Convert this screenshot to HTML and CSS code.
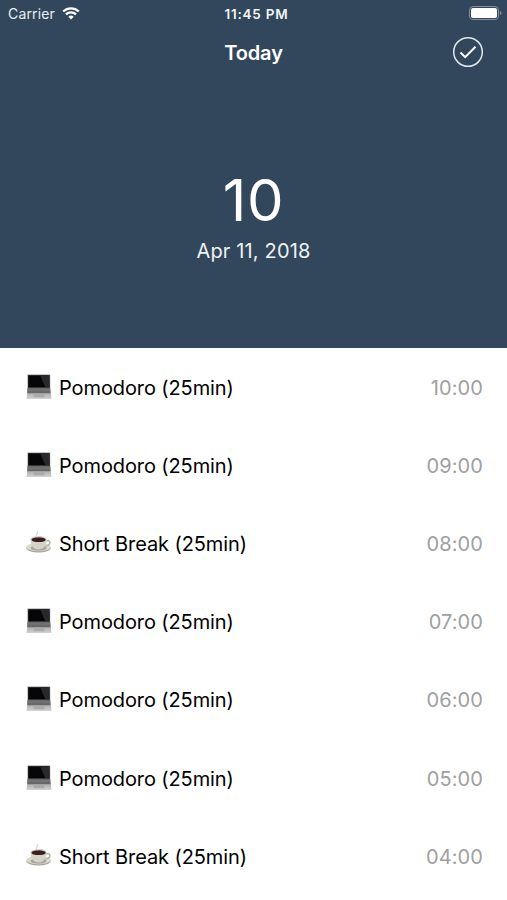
FILE: index.html
```html
<!DOCTYPE html>
<html lang="en">
<head>
<meta charset="utf-8">
<title>Today</title>
<link rel="stylesheet" href="styles.css">
</head>
<body>
<svg class="defs" aria-hidden="true">
  <defs>
    <linearGradient id="base" x1="0" y1="0" x2="0" y2="1"><stop offset="0" stop-color="#b0b0b0"/><stop offset="1" stop-color="#d2d2d2"/></linearGradient>
    <symbol id="laptop" viewBox="0 0 26 26">
      <path d="M1.500.5h22.700V19H1.500z" fill="#8c8c8c"/>
      <path d="M2.200 1.200h21.200l.2 12.500H2.200z" fill="#060608"/>
      <path d="M14 1.200h9.400l.2 12.500h-4z" fill="#29292c"/>
      <path d="M1.500 13.700h22.700l.6 6H1.200z" fill="#686868"/>
      <path d="M2 16h22" stroke="#888" stroke-width=".7"/>
      <path d="M1.200 19.500h23.600l.7 5.500H.5z" fill="url(#base)"/>
      <path d="M8 19.700h10l.6 3.500H7.500z" fill="#aaa"/>
    </symbol>
    <symbol id="coffee" viewBox="0 0 26 26">
      <ellipse cx="12.500" cy="18" rx="12.200" ry="4.500" fill="#a9a59b"/>
      <ellipse cx="12.500" cy="17.200" rx="12" ry="4" fill="#dcd9d2"/>
      <ellipse cx="12.500" cy="18" rx="8" ry="2.800" fill="#aaa69b"/>
      <path d="M20 11c5-2 5.500 4-.5 5" fill="none" stroke="#b9b6ae" stroke-width="1.700"/>
      <path d="M4.500 9.500C5 15 7 19.500 12.500 19.500s7.700-4.500 8.200-10z" fill="#d6d2c9"/>
      <ellipse cx="12.600" cy="9.200" rx="8.100" ry="3.200" fill="#d5d1c9"/>
      <ellipse cx="12.600" cy="9.700" rx="7.100" ry="2.400" fill="#3a211b"/>
      <path d="M12 7C7 5 14 4 11 1" fill="none" stroke="#ddd" stroke-width="1.300"/>
    </symbol>
  </defs>
</svg>
<header class="hero">
  <div class="status">
    <div class="carrier"><span>Carrier</span>
      <svg class="wifi" viewBox="0 0 18 13"><path d="M1.200 4.500a11.500 11.500 0 0 1 15.600 0M4 7.400a7.300 7.300 0 0 1 10 0" fill="none" stroke="#fff" stroke-width="2.200"/><path d="M9 12.500 6.300 9.700a4 4 0 0 1 5.400 0z" fill="#fff"/></svg>
    </div>
    <div class="clock">11:45 PM</div>
    <svg class="battery" viewBox="0 0 33 15"><rect x=".5" y=".5" width="29" height="13" rx="3.500" fill="none" stroke="#8391a0"/><rect x="2" y="2" width="26" height="10" rx="2" fill="#fff"/><path d="M31 5c2 .5 2 3.500 0 4z" fill="#8391a0"/></svg>
  </div>
  <nav class="nav"><h1>Today</h1>
    <svg class="check" viewBox="0 0 32 32"><circle cx="16" cy="16" r="14.300"/><path class="tick" d="m8.500 16.500 4.700 4.700L23.500 10.800"/></svg>
  </nav>
  <div class="count">10</div>
  <div class="date">Apr 11, 2018</div>
</header>
<main>
  <div class="row"><svg class="icon"><use href="#laptop"/></svg><span class="name">Pomodoro (25min)</span><time>10:00</time></div>
  <div class="row"><svg class="icon"><use href="#laptop"/></svg><span class="name">Pomodoro (25min)</span><time>09:00</time></div>
  <div class="row"><svg class="icon"><use href="#coffee"/></svg><span class="name">Short Break (25min)</span><time>08:00</time></div>
  <div class="row"><svg class="icon"><use href="#laptop"/></svg><span class="name">Pomodoro (25min)</span><time>07:00</time></div>
  <div class="row"><svg class="icon"><use href="#laptop"/></svg><span class="name">Pomodoro (25min)</span><time>06:00</time></div>
  <div class="row"><svg class="icon"><use href="#laptop"/></svg><span class="name">Pomodoro (25min)</span><time>05:00</time></div>
  <div class="row"><svg class="icon"><use href="#coffee"/></svg><span class="name">Short Break (25min)</span><time>04:00</time></div>
</main>
</body>
</html>
```
FILE: styles.css
```css
* { box-sizing: border-box; }
body { margin: 0; background: #fff; color: #000; font-family: Inter, sans-serif; overflow: hidden; height: 900px; }
.defs { display: block; width: 0; height: 0; }
.hero { height: 348px; background: #32475b; color: #fff; text-align: center; }
.status { height: 27px; display: grid; grid-template-columns: 1fr auto 1fr; align-items: center; padding: 0 5px 0 8px; font-size: 14px; }
.carrier { display: flex; align-items: center; gap: 7px; color: #e9eff4; letter-spacing: .15px; }
.wifi { width: 18px; height: 13px; }
.clock { padding-left: 3px; font-size: 13.5px; font-weight: 600; letter-spacing: .8px; color: #f2f6f9; }
.battery { width: 33px; height: 15px; justify-self: end; }
.nav { height: 50px; display: grid; grid-template-columns: 1fr auto 1fr; align-items: center; padding: 0 23px; }
h1 { grid-column: 2; margin: 0; padding-top: 1px; font-size: 20px; font-weight: 600; letter-spacing: -.1px; }
.check { width: 32px; height: 32px; justify-self: end; fill: none; stroke: #dfe9ed; stroke-width: 1.5; }
.tick { stroke: #fff; stroke-width: 2; }
.count { margin-top: 87px; height: 72px; line-height: 73px; font-size: 58px; font-weight: 370; letter-spacing: .7px; }
.date { height: 28px; line-height: 30px; font-size: 20px; letter-spacing: .15px; color: #edf3f5; }
.row { height: 78.2px; display: flex; align-items: center; padding: 1px 24px 0 26px; font-size: 20px; }
.icon { width: 26px; height: 26px; margin: 0 7px 2px 0; }
.name { flex: 1; letter-spacing: -.1px; }
time { color: #a0a0a0; letter-spacing: .1px; }
```
